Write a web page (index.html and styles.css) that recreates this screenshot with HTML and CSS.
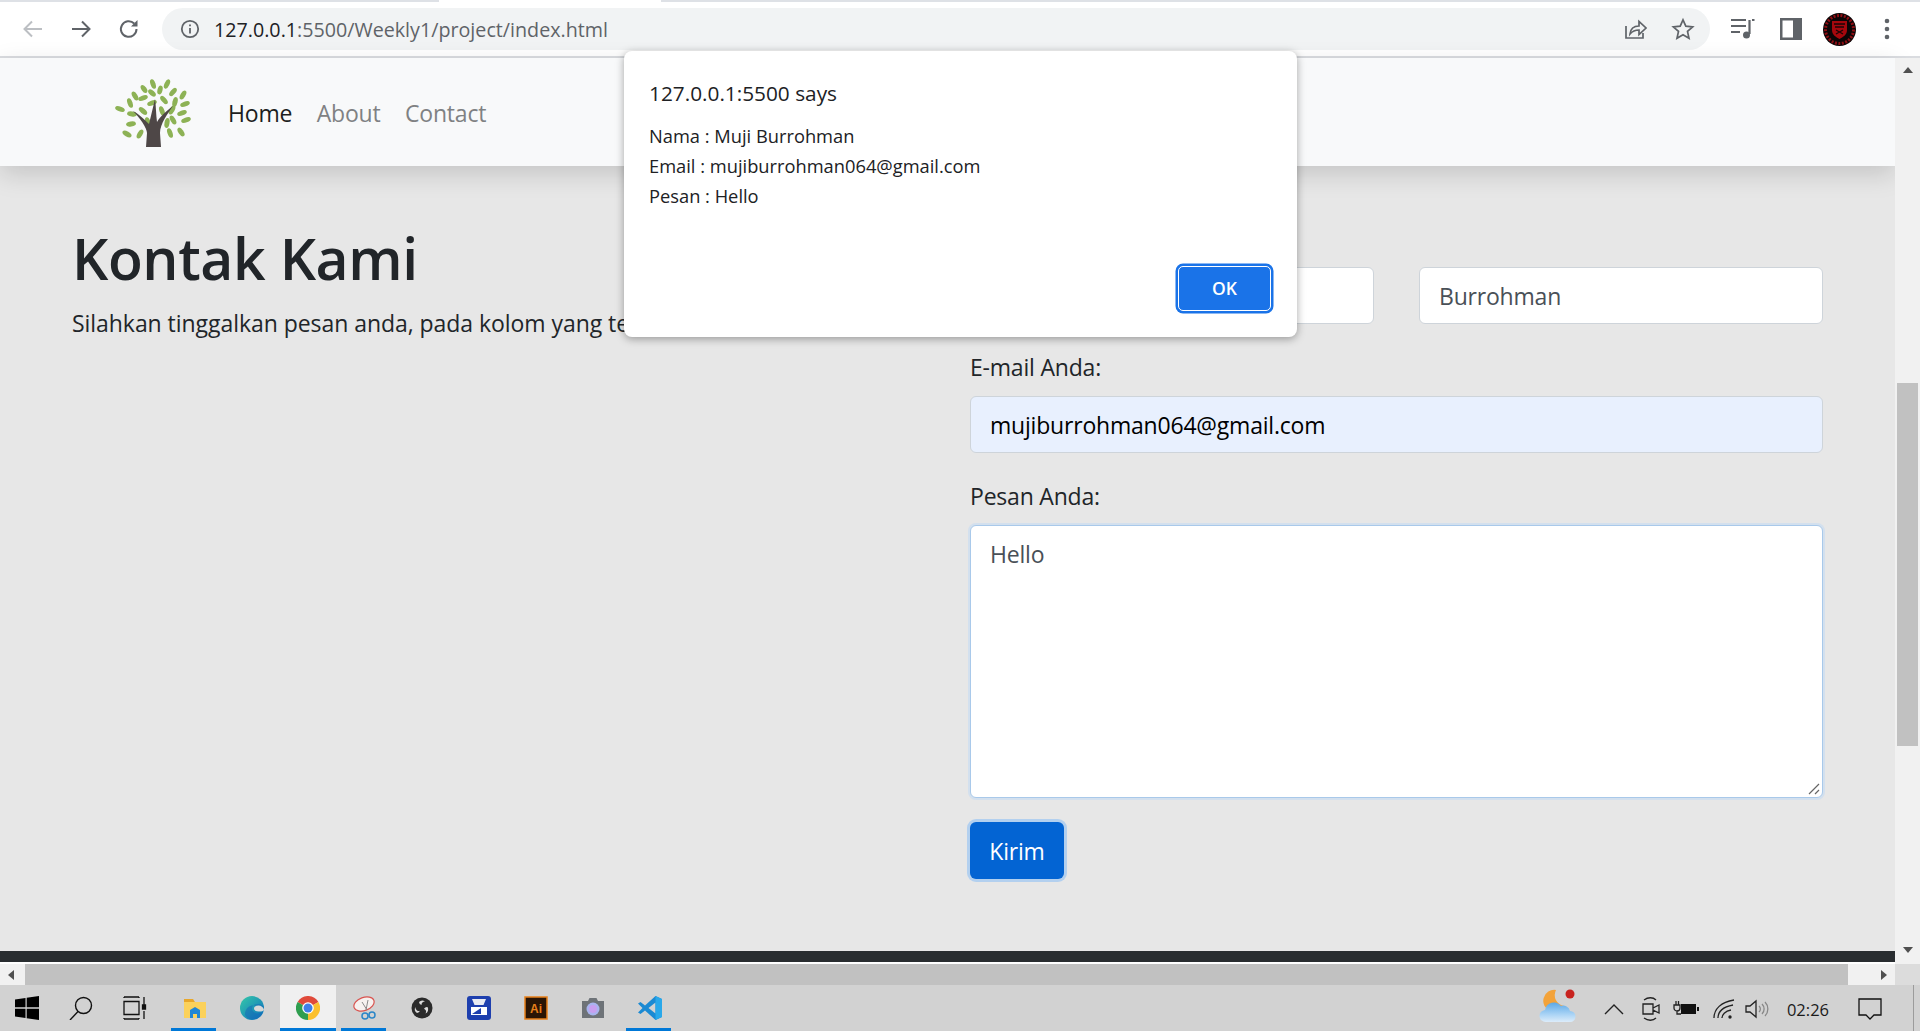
FILE: index.html
```html
<!DOCTYPE html>
<html lang="id">
<head>
  <meta charset="UTF-8">
  <title>Kontak Kami</title>
  <link rel="stylesheet" href="styles.css">
</head>
<body>
<div class="screen">
  <div class="tabstrip"><span class="tab-edge"></span></div>

  <div class="toolbar">
    <svg class="tb-icon dim" viewBox="0 0 24 24"><path d="M21 12H4M11 4.500 3.500 12l7.500 7.500"/></svg>
    <svg class="tb-icon" viewBox="0 0 24 24"><path d="M3 12h17M13 4.500l7.500 7.500-7.500 7.500"/></svg>
    <svg class="tb-icon" viewBox="0 0 24 24"><path d="M19.500 12a7.800 7.800 0 1 1-2.300-5.500"/><path class="solid" d="M20.500 3v6.500H14z"/></svg>
    <div class="omnibox">
      <svg class="info" viewBox="0 0 20 20"><circle cx="10" cy="10" r="8.200"/><path d="M10 9v5.500M10 5.500v1.800"/></svg>
      <span class="url"><b>127.0.0.1</b>:5500/Weekly1/project/index.html</span>
      <svg class="om-icon share" viewBox="0 0 24 24"><path d="M3 9v12h17v-5"/><path d="M7 17c.5-5 4-8 9-8V4.500L23 11l-7 6.500V13c-4 0-6.500 1-9 4z"/></svg>
      <svg class="om-icon star" viewBox="0 0 24 24"><path d="M12 2.800l2.800 6.300 6.900.7-5.200 4.600 1.500 6.800-6-3.500-6 3.500 1.500-6.800-5.200-4.600 6.900-.7z"/></svg>
    </div>
    <svg class="tb-right media" viewBox="0 0 24 24"><path class="stroke" d="M0 3h15M0 9h15M0 15h9"/><path class="stroke" d="M21 3h2.500M18.500 3v14"/><circle class="solid" cx="15.500" cy="18" r="3.500"/></svg>
    <svg class="tb-right panel" viewBox="0 0 22 22"><path class="solid" fill-rule="evenodd" d="M0 0h22v22H0zM2.500 2.500v17H13v-17z"/></svg>
    <svg class="avatar" viewBox="0 0 33 33">
      <circle cx="16.500" cy="16.500" r="16.500" fill="#0b0506"/>
      <circle cx="16.500" cy="16.500" r="14" fill="none" stroke="#8e0f14" stroke-width="3" stroke-dasharray="2 1.500"/>
      <path d="M9 8h15v9c0 5-4 7-7.500 9C13 24 9 22 9 17z" fill="#a5070d"/>
      <path d="M11 11h11M12 14h9M13 17l7 4M20 17l-7 4" stroke="#1c0406" stroke-width="1.300" fill="none"/>
    </svg>
    <svg class="kebab" viewBox="0 0 6 22"><circle cx="3" cy="3" r="2.300"/><circle cx="3" cy="11" r="2.300"/><circle cx="3" cy="19" r="2.300"/></svg>
  </div>

  <div class="viewport">
    <div class="page">
      <nav class="navbar">
        <svg class="logo" viewBox="0 0 77 69">
          <g fill="#8db255">
            <ellipse cx="38" cy="6" rx="2.500" ry="5" transform="rotate(-20 38 6)"/>
            <ellipse cx="52" cy="6" rx="2.500" ry="5" transform="rotate(25 52 6)"/>
            <ellipse cx="29" cy="11" rx="2.500" ry="4.500" transform="rotate(-35 29 11)"/>
            <ellipse cx="45" cy="12" rx="2.500" ry="4.500" transform="rotate(15 45 12)"/>
            <ellipse cx="58" cy="14" rx="2.500" ry="5" transform="rotate(40 58 14)"/>
            <ellipse cx="37" cy="15" rx="2.500" ry="4.500" transform="rotate(-50 37 15)"/>
            <ellipse cx="20" cy="18" rx="2.500" ry="5" transform="rotate(-30 20 18)"/>
            <ellipse cx="28" cy="20" rx="2.500" ry="5" transform="rotate(70 28 20)"/>
            <ellipse cx="49" cy="22" rx="2.500" ry="5" transform="rotate(-40 49 22)"/>
            <ellipse cx="68" cy="17" rx="2.500" ry="5" transform="rotate(30 68 17)"/>
            <ellipse cx="60" cy="24" rx="2.500" ry="5" transform="rotate(15 60 24)"/>
            <ellipse cx="70" cy="26" rx="2.500" ry="5" transform="rotate(70 70 26)"/>
            <ellipse cx="37" cy="25" rx="2.500" ry="5" transform="rotate(70 37 25)"/>
            <ellipse cx="15" cy="25" rx="2.500" ry="5" transform="rotate(-20 15 25)"/>
            <ellipse cx="5" cy="31" rx="2.500" ry="5" transform="rotate(-70 5 31)"/>
            <ellipse cx="17" cy="36" rx="2.500" ry="5" transform="rotate(-80 17 36)"/>
            <ellipse cx="28" cy="33" rx="2.500" ry="5" transform="rotate(-50 28 33)"/>
            <ellipse cx="47" cy="33" rx="2.500" ry="5" transform="rotate(-20 47 33)"/>
            <ellipse cx="57" cy="32" rx="2.500" ry="5" transform="rotate(30 57 32)"/>
            <ellipse cx="67" cy="35" rx="2.500" ry="5" transform="rotate(70 67 35)"/>
            <ellipse cx="58" cy="42" rx="2.500" ry="5" transform="rotate(-30 58 42)"/>
            <ellipse cx="71" cy="42" rx="2.500" ry="5" transform="rotate(70 71 42)"/>
            <ellipse cx="52" cy="45" rx="2.500" ry="5" transform="rotate(10 52 45)"/>
            <ellipse cx="16" cy="46" rx="2.500" ry="5" transform="rotate(80 16 46)"/>
            <ellipse cx="12" cy="56" rx="2.500" ry="5" transform="rotate(-60 12 56)"/>
            <ellipse cx="25" cy="56" rx="2.500" ry="5" transform="rotate(30 25 56)"/>
            <ellipse cx="55" cy="55" rx="2.500" ry="5" transform="rotate(-20 55 55)"/>
            <ellipse cx="66" cy="54" rx="2.500" ry="5" transform="rotate(-35 66 54)"/>
            <ellipse cx="33" cy="44" rx="2.500" ry="5" transform="rotate(-20 33 44)"/>
          </g>
          <path d="M31 69l1-14c0-5-7-15-14-22 6 3 12 9 16 13l6-25c1 7 1 16 2 23 3-5 9-11 16-16-5 7-13 18-13 27l1 14z" fill="#4e4747"/>
        </svg>
        <a class="nav-link active">Home</a>
        <a class="nav-link">About</a>
        <a class="nav-link">Contact</a>
      </nav>

      <main class="content">
        <section>
          <h1>Kontak Kami</h1>
          <p class="lead">Silahkan tinggalkan pesan anda, pada kolom yang tersedia.</p>
        </section>
        <form class="contact-form">
          <label>Nama Anda:</label>
          <div class="name-row">
            <input class="field" type="text" value="Muji">
            <input class="field" type="text" value="Burrohman">
          </div>
          <label>E-mail Anda:</label>
          <input class="field autofill" type="text" value="mujiburrohman064@gmail.com">
          <label>Pesan Anda:</label>
          <div class="message-wrap">
            <textarea class="field message">Hello</textarea>
            <svg class="grip" viewBox="0 0 12 12"><path d="M1 11 11 1M7 11l4-4"/></svg>
          </div>
          <button class="send" type="button">Kirim</button>
        </form>
      </main>

      <footer class="page-footer"></footer>
    </div>

    <div class="vscroll">
      <span class="arrow-up"></span>
      <span class="vthumb"></span>
      <span class="arrow-down"></span>
    </div>
  </div>

  <div class="hscroll">
    <span class="hbtn-left"><i class="arrow-left"></i></span>
    <span class="hthumb"></span>
    <span class="hbtn-right"><i class="arrow-right"></i></span>
    <span class="hcorner"></span>
  </div>

  <div class="taskbar">
    <div class="slot small">
      <svg class="ti" viewBox="0 0 24 24"><path d="M0 3.500 10.500 2v9.300H0zM11.700 1.800 24 0v11.300H11.700zM0 12.700h10.500V22L0 20.500zM11.700 12.700H24V24l-12.300-1.800z" fill="#000"/></svg>
    </div>
    <div class="slot small">
      <svg class="ti" viewBox="0 0 24 24" fill="none" stroke="#111" stroke-width="1.400"><circle cx="14.500" cy="9.500" r="8"/><path d="M9 15.500 1 24"/></svg>
    </div>
    <div class="slot small last-small">
      <svg class="ti" viewBox="0 0 24 24" fill="none" stroke="#111" stroke-width="1.300"><path d="M1 1h15M1 23h15M1 5.500h15v13H1zM21 1v8M21 15v8M1 1v1M16 1v1M1 22v1M16 22v1"/><path d="M19.500 9h3v4h-3z" fill="#111"/></svg>
    </div>
    <div class="slot open">
      <svg class="ti" viewBox="0 0 24 24"><path d="M1 3h9l2 3H1z" fill="#e8a72a"/><path d="M1 6h22v16H1z" fill="#fbd15b"/><path d="M7 22v-8l5-3 5 3v8h-3v-4h-4v4z" fill="#1f86d6"/></svg>
    </div>
    <div class="slot">
      <svg class="ti" viewBox="0 0 24 24">
        <defs><linearGradient id="edgeA" x1="0" y1="0" x2="1" y2="1"><stop offset="0" stop-color="#36c9a8"/><stop offset="1" stop-color="#0c6fc0"/></linearGradient></defs>
        <circle cx="12" cy="12" r="12" fill="url(#edgeA)"/>
        <path d="M24 13c0-3-3-5-6-5-4 0-6 2-6 4.500 0 3 3 5 6 5 2 0 4-1 5-2-1 4-5 8-11 8-3 0-6-2-7-5 0-4 2-8 7-9 4 0 9 1 12 3.500z" fill="#1565b5" opacity=".5"/>
        <path d="M24 14c-.5-3-3-4.500-5.500-4.500-3 0-4.500 1.500-4.500 3 0 2 2.500 3.500 6 3 1.500 0 3-.5 4-1.500z" fill="#d8d8d8"/>
      </svg>
    </div>
    <div class="slot active">
      <svg class="ti" viewBox="0 0 24 24">
        <path d="M12 12 1.600 6A12 12 0 0 1 22.400 6z" fill="#e04a3a"/>
        <path d="M12 12 22.400 6A12 12 0 0 1 12 24z" fill="#fbc02d"/>
        <path d="M12 12 12 24A12 12 0 0 1 1.600 6z" fill="#2f9e4f"/>
        <circle cx="12" cy="12" r="5.800" fill="#fff"/><circle cx="12" cy="12" r="4.500" fill="#3f7fe8"/>
      </svg>
    </div>
    <div class="slot open">
      <svg class="ti" viewBox="0 0 24 24" fill="none"><ellipse cx="11" cy="8" rx="10.500" ry="6.500" transform="rotate(-20 11 8)" fill="#f6f1ef" stroke="#d9534f" stroke-width="1.200"/><path d="M9 6l5 8M15 4l-2 10" stroke="#8a8a8a"/><circle cx="12" cy="20" r="3" stroke="#2a86c8" stroke-width="1.500"/><circle cx="19" cy="19" r="3" stroke="#2a86c8" stroke-width="1.500"/></svg>
    </div>
    <div class="slot">
      <svg class="ti" viewBox="0 0 24 24"><circle cx="12" cy="12" r="10.500" fill="#2b2b2b"/><path d="M9 6a4.500 4.500 0 0 1 6-.5 3.500 3.500 0 0 0-3.500 3.500A3.500 3.500 0 0 1 9 6zM17.500 11a4.500 4.500 0 0 1-2 6.500 3.500 3.500 0 0 0-1.500-4.800 3.500 3.500 0 0 1 3.500-1.700zM7 17a4.500 4.500 0 0 1-1.500-6 3.500 3.500 0 0 0 4.500 3.800A3.500 3.500 0 0 1 7 17z" fill="#dcdcdc"/></svg>
    </div>
    <div class="slot">
      <svg class="ti" viewBox="0 0 24 24"><rect width="24" height="24" rx="3" fill="#1e3fae"/><path d="M5 3h14l-2.500 6h-9z" fill="#e8eaf2"/><path d="M4 11h16v8H4z" fill="#fff"/><path d="M5 18l9-6v6z" fill="#1e3fae"/></svg>
    </div>
    <div class="slot">
      <svg class="ti" viewBox="0 0 24 24"><rect x="1" y="1" width="22" height="22" fill="#2a1505" stroke="#e8801a" stroke-width="1.500"/><text x="12" y="17" class="ai">Ai</text></svg>
    </div>
    <div class="slot">
      <svg class="ti" viewBox="0 0 24 24"><path d="M1 5h6l1.500-3h7L17 5h6v17H1z" fill="#6e7378"/><circle cx="12" cy="13" r="6.500" fill="#a9b4ef"/><circle cx="12" cy="13" r="4" fill="#c79ff0"/></svg>
    </div>
    <div class="slot open">
      <svg class="ti" viewBox="0 0 24 24"><path d="M17.500 0 24 3v18l-6.500 3L7 14.500 2.500 18 0 16.500 4.500 12 0 7.500 2.500 6 7 9.500z" fill="#1b8ad3"/><path d="M17.500 6.500 10.500 12l7 5.500z" fill="#d2d2d2"/><path d="M17.500 0 24 3v18l-6.500 3z" fill="#29a8ea"/></svg>
    </div>

    <div class="tray">
      <svg class="weather" viewBox="0 0 38 36">
        <defs><linearGradient id="cloudA" x1="0" y1="0" x2="0" y2="1"><stop offset="0" stop-color="#5ba8e6"/><stop offset=".6" stop-color="#a9d3f5"/><stop offset="1" stop-color="#dcecfa"/></linearGradient></defs>
        <path d="M17 1a11 11 0 1 0 8 16A11 11 0 0 1 17 1z" fill="#f3a33a"/>
        <path d="M7 33a6 6 0 0 1-1-12 9 9 0 0 1 16-4 7 7 0 0 1 9 5 5.500 5.500 0 0 1 0 11z" fill="url(#cloudA)"/>
        <circle cx="31" cy="5" r="4.500" fill="#c8231f"/>
      </svg>
      <svg class="tray-chevron" viewBox="0 0 20 12"><path d="M1 11 10 2l9 9"/></svg>
      <svg class="tray-icon meet" viewBox="0 0 18 24"><path d="M1 7h10v10H1zM11 11l6-3v8l-6-3zM2 3c4-3 9-3 12 0M2 21c4 3 9 3 12 0"/></svg>
      <svg class="tray-battery" viewBox="0 0 26 18"><path d="M1 5h6v3a3 3 0 0 1-6 0zM3 1v4M5.500 1v4M4 11v3h4"/><path class="fill" d="M8 4h15v10H8zM24 7h2v4h-2z"/></svg>
      <svg class="tray-icon wifi" viewBox="0 0 22 20"><path d="M1 19C1 10 8 3 21 1M5 19c0-6 5-11 15-13M9 19c0-3 3-7 9-8"/><circle class="fill" cx="17" cy="18" r="1.700"/></svg>
      <svg class="tray-icon speaker" viewBox="0 0 24 20"><path d="M1 7h4l6-5v16l-6-5H1z"/><path class="faint" d="M14 7a4 4 0 0 1 0 6M17 5a7 7 0 0 1 0 10M20 3a10 10 0 0 1 0 14"/></svg>
      <span class="clock">02:26</span>
      <svg class="notify" viewBox="0 0 24 22"><path d="M1 1h22v16h-7l-4 4-4-4H1z"/></svg>
    </div>
    <span class="desk-peek"></span>
  </div>

  <div class="dialog">
    <div class="dialog-title">127.0.0.1:5500 says</div>
    <div class="dialog-body">
      <div>Nama : Muji Burrohman</div>
      <div>Email : mujiburrohman064@gmail.com</div>
      <div>Pesan : Hello</div>
    </div>
    <button class="dialog-ok" type="button">OK</button>
  </div>
</div>
</body>
</html>
```

FILE: styles.css
```css
* { box-sizing: border-box; }
html, body { margin: 0; height: 100%; overflow: hidden; }
body { font-family: "Open Sans", "Noto Sans", sans-serif; color: #212529; }

.screen { position: relative; width: 1920px; height: 1031px; display: flex; flex-direction: column; overflow: hidden; background: #fff; }

/* browser chrome */
.tabstrip { height: 2px; background: #dee1e6; }
.tab-edge { display: block; width: 222px; height: 2px; margin-left: 439px; background: #fff; }
.toolbar { height: 56px; display: flex; align-items: center; background: #fff; border-bottom: 2px solid #dadce0; }
.tb-icon { width: 24px; height: 24px; margin-left: 21px; margin-right: 3px; fill: none; stroke: #5f6368; stroke-width: 2; }
.tb-icon.dim { stroke: #bcbfc3; }
.tb-icon .solid { fill: #5f6368; stroke: none; }
.omnibox { width: 1548px; height: 42px; margin-left: 18px; margin-right: 21px; border-radius: 21px; background: #f1f3f4; display: flex; align-items: center; padding-left: 18px; }
.info { width: 20px; height: 20px; fill: none; stroke: #5f6368; stroke-width: 1.800; flex: none; }
.url { margin-left: 14px; font-size: 19.700px; color: #5f6368; white-space: nowrap; }
.url b { font-weight: 400; color: #202124; }
.om-icon { width: 24px; height: 24px; fill: none; stroke: #5f6368; stroke-width: 1.700; flex: none; }
.share { margin-left: auto; }
.star { margin-left: 24px; margin-right: 15px; }
.tb-right { flex: none; }
.tb-right .solid { fill: #5f6368; }
.tb-right .stroke { fill: none; stroke: #5f6368; stroke-width: 2.200; }
.media { width: 24px; height: 24px; }
.panel { width: 22px; height: 22px; margin-left: 25px; }
.avatar { width: 33px; height: 33px; margin-left: 21px; flex: none; }
.kebab { width: 6px; height: 22px; margin-left: 28px; fill: #5f6368; flex: none; }

/* page */
.viewport { flex: 1; display: flex; min-height: 0; }
.page { flex: 1; display: flex; flex-direction: column; background: #e7e7e7; border-bottom: 2px solid #fff; min-width: 0; }
.navbar { height: 108px; background: #f8f9fa; display: flex; align-items: center; padding-left: 115px; box-shadow: 0 8px 24px rgba(0, 0, 0, .15); position: relative; flex: none; }
.logo { width: 77px; height: 69px; margin-right: 24px; margin-top: 1px; }
.nav-link { font-size: 23px; letter-spacing: -.2px; color: #7f8183; margin-left: 12px; margin-right: 12.500px; padding-top: 2px; }
.nav-link.active { color: #1c1e20; }

.content { flex: 1; display: grid; grid-template-columns: 1fr 1fr; column-gap: 45px; padding: 54px 72px 0; font-size: 23px; letter-spacing: -.2px; }
h1 { font-size: 57px; font-weight: 600; letter-spacing: -.4px; line-height: 72px; margin: 2px 0 11px; }
.lead { font-size: 23px; letter-spacing: -.05px; line-height: 36px; margin: 0; white-space: nowrap; }

.contact-form { display: flex; flex-direction: column; align-items: flex-start; }
.contact-form label { font-size: 23px; line-height: 36px; margin-top: 25px; margin-bottom: 11px; }
.contact-form label:first-child { margin-top: 0; }
.name-row { display: grid; grid-template-columns: 1fr 1fr; column-gap: 45px; width: 100%; }
.field { width: 100%; height: 57px; font: inherit; font-size: 23px; letter-spacing: -.2px; color: #495057; background: #fff; border: 1.500px solid #ced4da; border-radius: 6px; padding: 0 19px; outline: none; }
.autofill { background: #e8f0fe; color: #000; }
.message-wrap { position: relative; width: 100%; height: 273px; }
.message { display: block; height: 273px; padding-top: 12px; border-color: #a9c9ea; box-shadow: 0 0 0 2px #d3e0ee; resize: none; }
.grip { position: absolute; right: 3px; bottom: 3px; width: 12px; height: 12px; fill: none; stroke: #666; stroke-width: 1.200; }
.send { margin-top: 24px; width: 94px; height: 57px; padding: 0; font: inherit; font-size: 23px; letter-spacing: -.2px; color: #fff; background: #0364d3; border: 0; border-radius: 6px; box-shadow: 0 0 0 3px #b3d0ef; }
.page-footer { height: 11px; background: #292d30; flex: none; }

/* scrollbars */
.vscroll { width: 25px; background: #f1f1f1; display: flex; flex-direction: column; align-items: center; flex: none; position: relative; }
.arrow-up { width: 0; height: 0; margin-top: 9px; border: 5.500px solid transparent; border-top: 0; border-bottom: 6px solid #505050; }
.vthumb { width: 21px; height: 363px; margin-top: 310px; background: #c1c1c1; }
.arrow-down { width: 0; height: 0; margin-top: auto; margin-bottom: 11px; border: 5.500px solid transparent; border-bottom: 0; border-top: 6px solid #505050; }
.hscroll { height: 21px; display: flex; flex: none; background: #f1f1f1; }
.hbtn-left { width: 25px; display: flex; align-items: center; padding-left: 8px; }
.hbtn-right { width: 47px; display: flex; align-items: center; justify-content: flex-end; padding-right: 8px; }
.hthumb { flex: 1; background: #c1c1c1; }
.hcorner { width: 25px; background: #dcdcdc; }
.arrow-left { border: 5.500px solid transparent; border-left: 0; border-right: 6px solid #505050; }
.arrow-right { border: 5.500px solid transparent; border-right: 0; border-left: 6px solid #505050; }

/* taskbar */
.taskbar { height: 46px; display: flex; background: #d2d2d2; flex: none; }
.slot { width: 57px; height: 46px; display: flex; align-items: center; justify-content: center; flex: none; border-bottom: 3px solid transparent; padding-top: 3px; }
.slot.small { width: 54px; }
.slot.last-small { margin-right: 4px; }
.slot.open { border-image: linear-gradient(to right, transparent 6px, #0078d7 6px, #0078d7 calc(100% - 8px), transparent calc(100% - 8px)) 1; }
.slot.active { background: #f0f0f0; border-bottom-color: #0078d7; width: 56px; }
.ti { width: 24px; height: 24px; }
.ai { font-family: "Liberation Sans", sans-serif; font-size: 12px; font-weight: 700; fill: #e8801a; text-anchor: middle; }

.tray { margin-left: auto; display: flex; align-items: center; padding-top: 2px; }
.weather { width: 38px; height: 36px; margin-right: 27px; margin-top: -4px; }
.tray-chevron { width: 20px; height: 12px; margin-right: 18px; fill: none; stroke: #222; stroke-width: 1.400; }
.tray-icon { width: 20px; height: 20px; margin-right: 14px; fill: none; stroke: #222; stroke-width: 1.300; }
.tray-icon .fill { fill: #222; stroke: none; }
.tray-icon .faint { stroke: #888; }
.tray-icon.meet { width: 18px; height: 24px; margin-right: 13px; }
.tray-icon.wifi { width: 22px; margin-right: 10px; }
.tray-icon.speaker { width: 24px; margin-right: 14px; }
.tray-battery { width: 26px; height: 18px; margin-right: 14px; fill: none; stroke: #222; stroke-width: 1.300; }
.tray-battery .fill { fill: #111; stroke: none; }
.clock { font-size: 16.500px; color: #1a1a1a; margin-left: 4px; margin-right: 29px; white-space: nowrap; }
.notify { width: 24px; height: 22px; fill: none; stroke: #111; stroke-width: 1.300; margin-right: 31px; }
.desk-peek { width: 1px; background: #9c9c9c; margin-right: 6px; flex: none; }

/* alert */
.dialog { position: absolute; left: 624px; top: 51px; width: 673px; height: 286px; background: #fff; border-radius: 8px; box-shadow: 0 2px 8px rgba(0, 0, 0, .35); padding: 27px 25px 0; }
.dialog-title { font-size: 20.800px; line-height: 30px; color: #202124; }
.dialog-body { font-size: 18.300px; line-height: 30px; color: #202124; margin-top: 13px; }
.dialog-ok { position: absolute; right: 26px; bottom: 26.500px; width: 93px; height: 45px; padding: 0; font: inherit; font-size: 17.500px; font-weight: 600; color: #fff; background: #1a73e8; border: 1px solid #fff; border-radius: 5px; box-shadow: 0 0 0 2.500px #1a73e8; }
```
